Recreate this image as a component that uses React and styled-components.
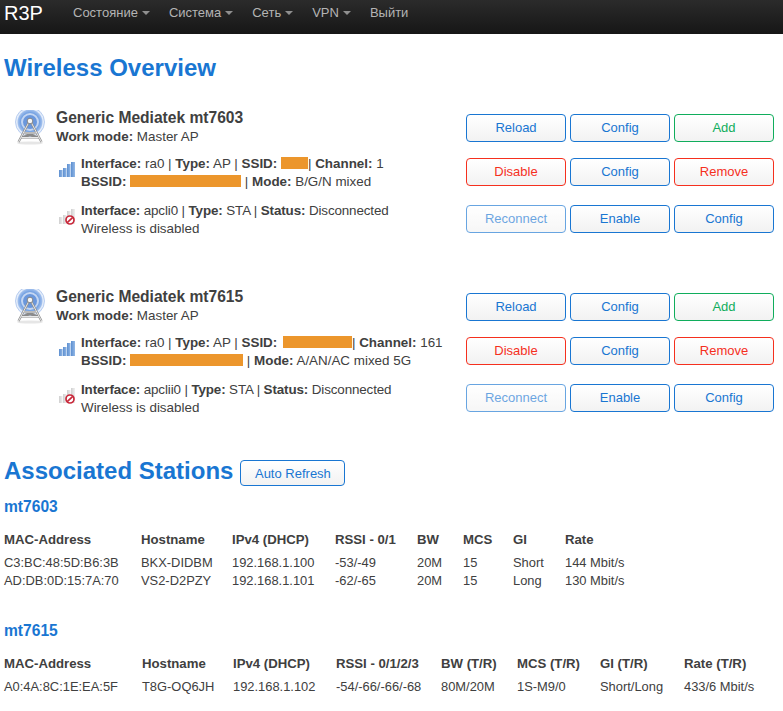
import React from 'react';
import styled, { createGlobalStyle } from 'styled-components';

const BLUE = '#1976d2';

const GlobalStyle = createGlobalStyle`
  html, body {
    margin: 0;
    padding: 0;
    background: #fff;
    font-family: "Liberation Sans", Arial, sans-serif;
    font-size: 13.4px;
    color: #404040;
  }
`;

const Navbar = styled.div`
  height: 34px;
  display: flex;
  align-items: center;
  padding-left: 4px;
  background: linear-gradient(to bottom, #2b2b2b, #161616);
`;

const Brand = styled.div`
  width: 69px;
  font-size: 20px;
  color: #fff;
  margin-top: -7px;
`;

const NavItem = styled.div`
  display: flex;
  align-items: center;
  font-size: 13px;
  color: #b4b4b4;
  margin-right: 19px;
  margin-top: -9px;
`;

const Caret = styled.span`
  width: 0;
  height: 0;
  margin-left: 4px;
  margin-top: 1px;
  border-left: 4px solid transparent;
  border-right: 4px solid transparent;
  border-top: 4px solid #8f8f8f;
`;

const Page = styled.div`
  padding: 0 4px;
`;

const Heading = styled.h1`
  margin: 19px 0 0;
  font-size: 24px;
  line-height: 30px;
  font-weight: bold;
  color: ${BLUE};
`;

const Device = styled.div`
  margin-top: ${(p) => p.$top}px;
`;

const Row = styled.div`
  display: flex;
  justify-content: space-between;
  align-items: center;
  height: 28px;
  margin-top: ${(p) => p.$top || 0}px;
  padding-right: 5px;
`;

const DeviceHead = styled.div`
  display: flex;
  align-items: flex-start;
  height: 28px;
  padding-left: 10px;
`;

const TowerBox = styled.div`
  width: 32px;
  height: 36px;
  margin-right: 10px;
  margin-top: -4px;
`;

const DeviceText = styled.div`
  line-height: 18px;
  margin-top: -6px;
`;

const DeviceName = styled.div`
  font-size: 15.6px;
  font-weight: bold;
  line-height: 20px;
`;

const Iface = styled.div`
  display: flex;
  align-items: center;
  padding-left: 54px;
`;

const SignalBox = styled.div`
  width: 17px;
  height: 18px;
  margin-right: 6px;
  margin-top: -4px;
`;

const IfaceText = styled.div`
  line-height: 18px;
  margin-top: 2px;
`;

const IfaceLine = styled.div`
  letter-spacing: ${(p) => (p.$tight ? '-0.12px' : 'normal')};
`;

const Redacted = styled.span`
  display: inline-block;
  width: ${(p) => p.$w}px;
  height: 12px;
  background: #ec962c;
  vertical-align: -1px;
  margin-left: ${(p) => p.$left || 0}px;
`;

const Buttons = styled.div`
  display: flex;
  gap: 4px;
`;

const palette = {
  blue: BLUE,
  red: '#f5301e',
  green: '#10ad5c',
};

const Button = styled.div`
  box-sizing: border-box;
  width: 100px;
  height: 28px;
  line-height: 26px;
  text-align: center;
  font-size: 13px;
  border: 1px solid ${(p) => palette[p.$kind || 'blue']};
  color: ${(p) => palette[p.$kind || 'blue']};
  border-radius: 4px;
  background: linear-gradient(to bottom, #fff, #f2f2f2);
  opacity: ${(p) => (p.$off ? 0.65 : 1)};
`;

const RefreshButton = styled(Button)`
  width: 105px;
  height: 26px;
  line-height: 26px;
  margin-top: 4px;
`;

const StationsHead = styled.div`
  display: flex;
  align-items: flex-start;
  margin-top: 44px;
`;

const SubHeading = styled.h2`
  margin: 0;
  font-size: 24px;
  line-height: 30px;
  font-weight: bold;
  color: ${BLUE};
  margin-right: 7px;
`;

const RadioName = styled.h3`
  margin: ${(p) => p.$top}px 0 0;
  font-size: 15.6px;
  line-height: 20px;
  font-weight: bold;
  color: ${BLUE};
`;

const TableGrid = styled.div`
  display: grid;
  grid-template-columns: ${(p) => p.$cols};
  margin-top: ${(p) => p.$top || 0}px;
  font-size: 12.9px;
  line-height: 18px;
  white-space: nowrap;
`;

const Th = styled.div`
  font-size: 13.2px;
  font-weight: bold;
  padding-bottom: 5px;
`;

const Td = styled.div``;

function Tower() {
  return (
    <svg width="32" height="36" viewBox="0 0 32 36">
      <defs>
        <radialGradient id="waves" cx="50%" cy="50%" r="50%">
          <stop offset="0%" stopColor="#5f8fd8" />
          <stop offset="70%" stopColor="#6c9ce0" />
          <stop offset="100%" stopColor="#a8c4ee" />
        </radialGradient>
      </defs>
      <ellipse cx="16" cy="33" rx="13" ry="1.6" fill="#e6e6e6" />
      <circle cx="16" cy="12" r="14.5" fill="#e4edfa" stroke="#a9c3ec" strokeWidth="0.8" />
      <circle cx="16" cy="12" r="12.5" fill="url(#waves)" />
      <circle cx="16" cy="12" r="9" fill="#c4d6f2" />
      <circle cx="16" cy="12" r="7" fill="#6a97dc" />
      <path d="M14.5 13 L4.5 32 M17.5 13 L27.5 32 M10 23 H22 M7.5 27.5 H24.5 M10.5 23 L24.5 27.5 M21.5 23 L7.5 27.5" stroke="#8b8b8b" strokeWidth="2.2" fill="none" />
      <path d="M14.5 13 L4.5 32 M17.5 13 L27.5 32 M10 23 H22 M7.5 27.5 H24.5" stroke="#f4f4f4" strokeWidth="0.9" fill="none" />
      <circle cx="16" cy="11" r="2.8" fill="#f6f6f6" stroke="#7d7d7d" strokeWidth="0.9" />
    </svg>
  );
}

function Signal({ off }) {
  const bars = [
    [1, 9, 3.6, 7],
    [5, 7, 3.6, 9],
    [9, 3, 3.6, 13],
    [13, 1, 4, 15],
  ];
  return (
    <svg width="17" height="18" viewBox="0 0 17 18">
      <defs>
        <linearGradient id="barOn" x1="0" y1="0" x2="1" y2="0">
          <stop offset="0%" stopColor="#5d8fd0" />
          <stop offset="100%" stopColor="#93b8e6" />
        </linearGradient>
        <linearGradient id="barOff" x1="0" y1="0" x2="1" y2="0">
          <stop offset="0%" stopColor="#cfcfcf" />
          <stop offset="100%" stopColor="#f0f0f0" />
        </linearGradient>
      </defs>
      {bars.map((b, i) => (
        <rect key={i} x={b[0]} y={b[1]} width={b[2]} height={b[3]} fill={off ? 'url(#barOff)' : 'url(#barOn)'} />
      ))}
      {off && (
        <g>
          <circle cx="12" cy="12" r="4" fill="#fff" stroke="#c8283a" strokeWidth="1.7" />
          <path d="M9.2 14.6 L14.8 9.4" stroke="#c8283a" strokeWidth="1.7" />
        </g>
      )}
    </svg>
  );
}

function DeviceBlock({ top, name, ssid, ssidLeft, channel, bssid, mode, cli }) {
  return (
    <Device $top={top}>
      <Row>
        <DeviceHead>
          <TowerBox><Tower /></TowerBox>
          <DeviceText>
            <DeviceName>{name}</DeviceName>
            <div><b>Work mode:</b> Master AP</div>
          </DeviceText>
        </DeviceHead>
        <Buttons>
          <Button>Reload</Button>
          <Button>Config</Button>
          <Button $kind="green">Add</Button>
        </Buttons>
      </Row>
      <Row $top={16}>
        <Iface>
          <SignalBox><Signal /></SignalBox>
          <IfaceText>
            <IfaceLine><b>Interface:</b> ra0 | <b>Type:</b> AP | <b>SSID:</b> <Redacted $w={ssid} $left={ssidLeft} />| <b>Channel:</b> {channel}</IfaceLine>
            <IfaceLine><b>BSSID:</b> <Redacted $w={bssid} /> | <b>Mode:</b> {mode}</IfaceLine>
          </IfaceText>
        </Iface>
        <Buttons>
          <Button $kind="red">Disable</Button>
          <Button>Config</Button>
          <Button $kind="red">Remove</Button>
        </Buttons>
      </Row>
      <Row $top={19}>
        <Iface>
          <SignalBox><Signal off /></SignalBox>
          <IfaceText>
            <IfaceLine $tight><b>Interface:</b> {cli} | <b>Type:</b> STA | <b>Status:</b> Disconnected</IfaceLine>
            <IfaceLine>Wireless is disabled</IfaceLine>
          </IfaceText>
        </Iface>
        <Buttons>
          <Button $off>Reconnect</Button>
          <Button>Enable</Button>
          <Button>Config</Button>
        </Buttons>
      </Row>
    </Device>
  );
}

function Stations({ cols, head, rows, top }) {
  return (
    <TableGrid $cols={cols} $top={top}>
      {head.map((h) => <Th key={h}>{h}</Th>)}
      {rows.map((r) => r.map((c, i) => <Td key={r[0] + i}>{c}</Td>))}
    </TableGrid>
  );
}

export default function App() {
  return (
    <>
      <GlobalStyle />
      <Navbar>
        <Brand>R3P</Brand>
        <NavItem>Состояние<Caret /></NavItem>
        <NavItem>Система<Caret /></NavItem>
        <NavItem>Сеть<Caret /></NavItem>
        <NavItem>VPN<Caret /></NavItem>
        <NavItem>Выйти</NavItem>
      </Navbar>
      <Page>
        <Heading>Wireless Overview</Heading>
        <DeviceBlock top={31} name="Generic Mediatek mt7603" ssid={27} channel="1" bssid={111} mode="B/G/N mixed" cli="apcli0" />
        <DeviceBlock top={60} name="Generic Mediatek mt7615" ssid={69} ssidLeft={2} channel="161" bssid={113} mode="A/AN/AC mixed 5G" cli="apclii0" />
        <StationsHead>
          <SubHeading>Associated Stations</SubHeading>
          <RefreshButton>Auto Refresh</RefreshButton>
        </StationsHead>
        <RadioName $top={11}>mt7603</RadioName>
        <Stations
          top={14}
          cols="137px 91px 103px 82px 46px 50px 52px 1fr"
          head={['MAC-Address', 'Hostname', 'IPv4 (DHCP)', 'RSSI - 0/1', 'BW', 'MCS', 'GI', 'Rate']}
          rows={[
            ['C3:BC:48:5D:B6:3B', 'BKX-DIDBM', '192.168.1.100', '-53/-49', '20M', '15', 'Short', '144 Mbit/s'],
            ['AD:DB:0D:15:7A:70', 'VS2-D2PZY', '192.168.1.101', '-62/-65', '20M', '15', 'Long', '130 Mbit/s'],
          ]}
        />
        <RadioName $top={31}>mt7615</RadioName>
        <Stations
          top={14}
          cols="138px 91px 103px 105px 76px 83px 84px 1fr"
          head={['MAC-Address', 'Hostname', 'IPv4 (DHCP)', 'RSSI - 0/1/2/3', 'BW (T/R)', 'MCS (T/R)', 'GI (T/R)', 'Rate (T/R)']}
          rows={[
            ['A0:4A:8C:1E:EA:5F', 'T8G-OQ6JH', '192.168.1.102', '-54/-66/-66/-68', '80M/20M', '1S-M9/0', 'Short/Long', '433/6 Mbit/s'],
          ]}
        />
      </Page>
    </>
  );
}
